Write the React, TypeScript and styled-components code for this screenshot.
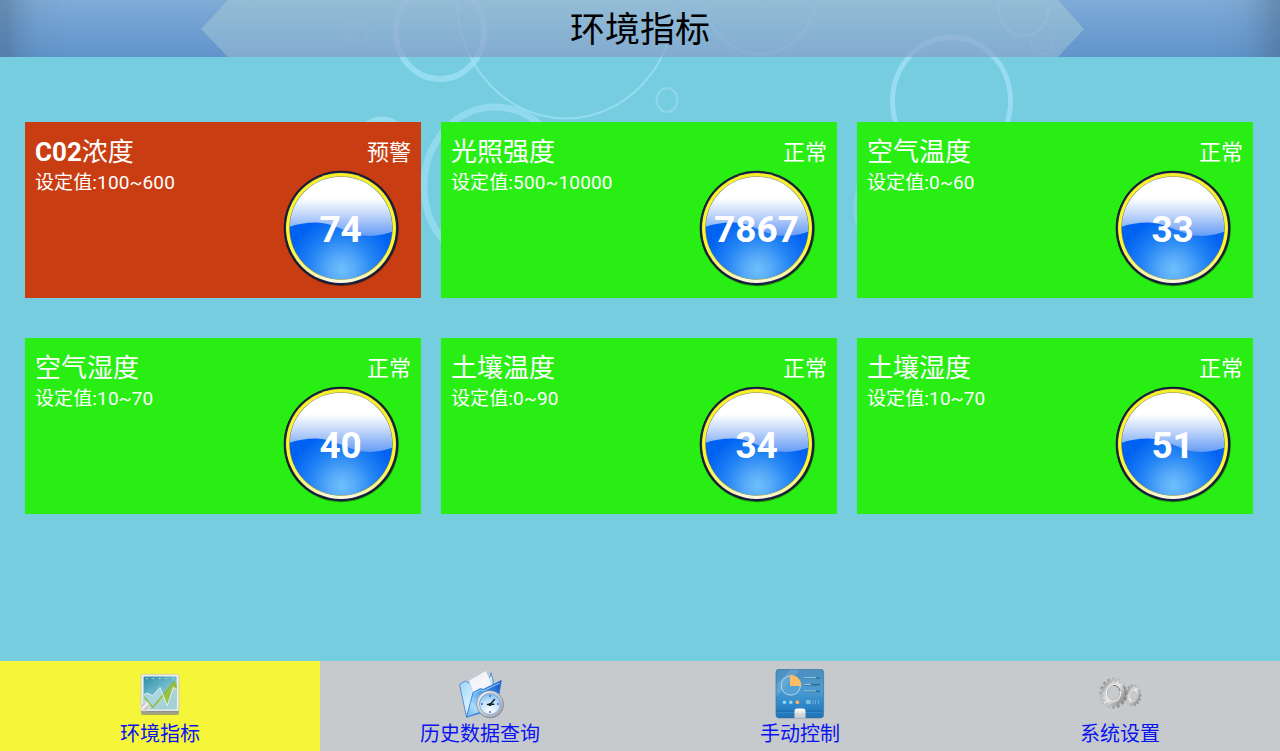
import React from "react";
import styled, { createGlobalStyle } from "styled-components";

const GlobalStyle = createGlobalStyle`
  * { box-sizing: border-box; }
  html, body { margin: 0; padding: 0; overflow: hidden; }
  body { font-family: Roboto, "Noto Sans CJK SC", sans-serif; }
`;

const Screen = styled.div`
  position: relative;
  display: flex;
  flex-direction: column;
  width: 1280px;
  height: 751px;
  overflow: hidden;
  background: #76cde0;
`;

const Wallpaper = styled.svg`
  position: absolute;
  inset: 0;
`;

const Header = styled.header`
  position: relative;
  flex: none;
  height: 57px;
  display: flex;
  justify-content: center;
  background:
    linear-gradient(90deg, rgba(58, 84, 112, 0.36) 0, rgba(58, 84, 112, 0.34) 8px, rgba(58, 84, 112, 0.26) 13px, rgba(70, 110, 140, 0.1) 35px, transparent 68px),
    linear-gradient(270deg, rgba(58, 84, 112, 0.36) 0, rgba(58, 84, 112, 0.34) 6px, rgba(58, 84, 112, 0.26) 13px, rgba(70, 110, 140, 0.1) 35px, transparent 68px),
    linear-gradient(180deg, #80abd6 0%, #6f9fd2 50%, #6194cb 100%);
`;

const Ribbon = styled.div`
  width: 883px;
  margin-left: 5px;
  height: 57px;
  background: linear-gradient(180deg, #94bcd6 0%, #8ab4d3 50%, #82abd0 100%);
  clip-path: polygon(27px 0, 857px 0, 100% 29px, 857px 100%, 27px 100%, 0 29px);
`;

const HeaderRings = styled.svg`
  position: absolute;
  inset: 0;
`;

const TitleLayer = styled.div`
  position: absolute;
  inset: 0;
  display: flex;
  justify-content: center;
`;

const Title = styled.h1`
  margin: 0;
  padding-top: 2px;
  font-size: 35px;
  line-height: 57px;
  font-weight: 400;
  color: #000;
`;

const Grid = styled.main`
  position: relative;
  flex: 1;
  display: grid;
  grid-template-columns: repeat(3, 396px);
  grid-auto-rows: 176px;
  align-content: start;
  gap: 40px 20px;
  padding: 65px 27px 0 25px;
`;

const Card = styled.section<{ $alert?: boolean }>`
  display: flex;
  justify-content: space-between;
  padding: 13px 10px 0 10px;
  color: #fff;
  background: ${(p) => (p.$alert ? "rgba(202, 58, 15, 0.985)" : "rgba(39, 238, 15, 0.985)")};
`;

const CardInfo = styled.div`
  display: flex;
  flex-direction: column;
`;

const CardName = styled.div`
  font-size: 26px;
  line-height: 34px;
  b { font-weight: 700; }
`;

const CardRange = styled.div`
  font-size: 19px;
  line-height: 28px;
  letter-spacing: 0.12px;
`;

const CardState = styled.div`
  display: flex;
  flex-direction: column;
  align-items: flex-end;
`;

const StateText = styled.div`
  padding-top: 1px;
  font-size: 22px;
  line-height: 34px;
`;

const Orb = styled.div`
  display: grid;
  width: 120px;
  height: 120px;
  margin: -2.4px 10.4px 0 0;
  > * { grid-area: 1 / 1; }
`;

const OrbValue = styled.span`
  position: relative;
  place-self: center;
  padding-top: 5px;
  font-size: 37px;
  line-height: 40px;
  font-weight: 700;
`;

const NavBar = styled.nav`
  position: relative;
  flex: none;
  display: grid;
  grid-template-columns: repeat(4, 1fr);
  height: 90px;
`;

const NavItem = styled.div<{ $active?: boolean }>`
  display: flex;
  flex-direction: column;
  align-items: center;
  padding-top: 8px;
  color: #0a14f0;
  background: ${(p) => (p.$active ? "#f5f53a" : "#c6cacd")};
`;

const NavLabel = styled.span`
  font-size: 20px;
  line-height: 31px;
`;

type Ring = [cx: number, cy: number, rx: number, ry: number, w: number, o: number];

const rings: Ring[] = [
  [440, 31, 44.5, 48, 6, 0.75],
  [566, 0, 109, 118.5, 2, 0.75],
  [495, 186, 71, 79, 7, 0.65],
  [667, 100, 10.5, 12, 2, 0.6],
  [760, -8, 57, 62, 3, 0.5],
  [357, 32, 11, 12, 2, 0.4],
  [951.5, 101, 59, 63.5, 5, 0.8],
  [1023.5, 8, 25, 28, 3, 0.6],
  [1042, 42, 11, 12, 2, 0.4],
  [382, 149, 27, 30, 5, 0.75],
  [903, 208, 48, 52, 3, 0.35],
  [1009, 201, 25, 29, 3, 0.6],
  [634, 176, 45, 53, 3, 0.5],
];

const RingShapes = ({ color, fade = 1 }: { color: string; fade?: number }) => (
  <>
    {rings.map(([cx, cy, rx, ry, w, o], i) => (
      <ellipse key={i} cx={cx} cy={cy} rx={rx} ry={ry} fill="none" stroke={color} strokeWidth={w} opacity={o * fade} />
    ))}
  </>
);

const OrbArt = () => (
  <svg width="120" height="120" viewBox="0 0 120 120">
    <defs>
      <linearGradient id="orbRim" x1="0" y1="0" x2="0" y2="1">
        <stop offset="0" stopColor="#f6ee2c" />
        <stop offset="0.65" stopColor="#fff830" />
        <stop offset="0.88" stopColor="#fbf790" />
        <stop offset="1" stopColor="#fdfbe6" />
      </linearGradient>
      <radialGradient id="orbBlue" gradientUnits="userSpaceOnUse" cx="61" cy="102" r="54">
        <stop offset="0" stopColor="#6dc0fa" />
        <stop offset="0.25" stopColor="#56aaf8" />
        <stop offset="0.6" stopColor="#2384f4" />
        <stop offset="1" stopColor="#0062f2" />
      </radialGradient>
      <linearGradient id="orbGloss" gradientUnits="userSpaceOnUse" x1="0" y1="10" x2="0" y2="69">
        <stop offset="0" stopColor="#fff" />
        <stop offset="0.34" stopColor="#fff" />
        <stop offset="0.6" stopColor="#c8dafb" />
        <stop offset="1" stopColor="#6098f4" />
      </linearGradient>
      <clipPath id="orbClip"><circle cx="60" cy="60" r="51.3" /></clipPath>
    </defs>
    <circle cx="60.3" cy="60.6" r="57.6" fill="#201a18" opacity="0.5" />
    <circle cx="60" cy="60" r="57.2" fill="#12182c" />
    <circle cx="60" cy="60" r="55.7" fill="none" stroke="#1f2e66" strokeWidth="0.8" />
    <circle cx="60" cy="60" r="55" fill="url(#orbRim)" />
    <circle cx="60" cy="60" r="51.8" fill="#a39a35" />
    <g clipPath="url(#orbClip)">
      <rect x="8" y="8" width="104" height="104" fill="url(#orbBlue)" />
      <path d="M8 8H112V63.5C101 67.5 89 69.5 76 66.5C64 63.5 51 54.5 35 54.5C25 54.5 16 56 8 59Z" fill="url(#orbGloss)" />
    </g>
  </svg>
);

const ChartIcon = () => (
  <svg width="50" height="50" viewBox="0 0 50 50">
    <defs>
      <linearGradient id="chBg" x1="0" y1="0" x2="0.7" y2="1">
        <stop offset="0" stopColor="#2f8ba7" />
        <stop offset="0.55" stopColor="#75bfcf" />
        <stop offset="1" stopColor="#66aeb9" />
      </linearGradient>
      <linearGradient id="chBase" x1="0" y1="0" x2="0" y2="1">
        <stop offset="0" stopColor="#d5d9d8" />
        <stop offset="0.8" stopColor="#9aa0a0" />
        <stop offset="1" stopColor="#a5a85d" />
      </linearGradient>
    </defs>
    <rect x="6" y="30" width="38" height="16" rx="2" fill="url(#chBase)" />
    <rect x="6" y="5.3" width="38" height="37" rx="2.5" fill="#eceeed" stroke="#bfc5bf" strokeWidth="0.7" />
    <path d="M8 42.5H42" stroke="#777e7e" strokeWidth="0.7" />
    <rect x="8.6" y="7.6" width="33" height="32.6" rx="1" fill="url(#chBg)" />
    <path d="M17.7 38.3L28.3 26L39 12.7L41.6 17.7V24L38.3 18.5L32.3 36L29 30Z" fill="#a6c421" opacity="0.75" />
    <path d="M9 25.5L12.5 24L17.7 27L25 18.5L32.3 36.7L38.3 18.5L41.6 20.5V40.2H9Z" fill="#cfe6e8" opacity="0.6" />
    <path d="M9 27.7L17.7 38.3L28.3 26L39 12.7L41.6 17.7" fill="none" stroke="#91b62b" strokeWidth="1.2" />
    <path d="M9 25.5L12.5 24L17.7 27L25 18.5L32.3 36.7L38.3 18.5L41.6 20.5" fill="none" stroke="#e9f6f5" strokeWidth="0.9" />
    <path d="M11 9.5H39" stroke="#bce0e5" strokeWidth="1.2" strokeDasharray="1.5 5" />
    <circle cx="10" cy="37.5" r="4.4" fill="#c8cccb" stroke="#f1f1ed" strokeWidth="0.7" />
    <path d="M7 40L13 34" stroke="#f4f4f2" strokeWidth="1.8" />
  </svg>
);

const HistoryIcon = () => (
  <svg width="50" height="50" viewBox="0 0 50 50">
    <defs>
      <linearGradient id="hiBack" x1="0" y1="0" x2="1" y2="1">
        <stop offset="0" stopColor="#8fcdf8" />
        <stop offset="0.5" stopColor="#d6f0ff" />
        <stop offset="1" stopColor="#4f9ee8" />
      </linearGradient>
      <linearGradient id="hiFront" x1="1" y1="0" x2="0" y2="1">
        <stop offset="0" stopColor="#124fc0" />
        <stop offset="0.4" stopColor="#3c92e6" />
        <stop offset="0.75" stopColor="#a8dcfb" />
        <stop offset="1" stopColor="#6ab4f0" />
      </linearGradient>
      <radialGradient id="hiFace" cx="0.5" cy="0.85" r="0.85">
        <stop offset="0" stopColor="#fff" />
        <stop offset="0.55" stopColor="#c4e6fb" />
        <stop offset="1" stopColor="#7dbcf0" />
      </radialGradient>
      <linearGradient id="hiRim" x1="0" y1="0" x2="1" y2="1">
        <stop offset="0" stopColor="#f7f9fb" />
        <stop offset="1" stopColor="#98a4b4" />
      </linearGradient>
    </defs>
    <path d="M4.5 15.5L10.5 12L13.5 14L35 8L36 3.8L38.3 12L34 42L11.5 48Z" fill="url(#hiBack)" stroke="#377fce" strokeWidth="0.8" strokeLinejoin="round" />
    <path d="M14 11.5L30.7 1.7L41 23L21 33Z" fill="#f4f6fc" stroke="#c0cadc" strokeWidth="0.6" />
    <path d="M17 13L30 5M18 15L31 8" stroke="#dce3ef" strokeWidth="0.5" />
    <path d="M18 23.5L25.5 19.5L28 20.5L46.3 11.5L42 37L11.5 48.2Z" fill="url(#hiFront)" stroke="#2b6fd0" strokeWidth="0.8" strokeLinejoin="round" />
    <path d="M19 24.5L25.5 21L28 22L44.8 14" fill="none" stroke="#a9dbff" strokeWidth="0.9" />
    <circle cx="35.2" cy="35.6" r="13.6" fill="#5d687a" opacity="0.55" />
    <circle cx="35" cy="35" r="13.3" fill="url(#hiRim)" stroke="#7c899c" strokeWidth="0.6" />
    <circle cx="35" cy="35" r="10.5" fill="url(#hiFace)" stroke="#7b91ae" strokeWidth="0.7" />
    <path d="M35 26V28M35 42V44M26 35H28M42 35H44" stroke="#5b5fc4" strokeWidth="1.5" />
    <path d="M32.5 35.5L38.8 35.3M34.5 36L39.5 30.5" stroke="#15202c" strokeWidth="1.5" strokeLinecap="round" />
    <circle cx="35" cy="35.5" r="1.5" fill="#15202c" />
  </svg>
);

const ControlIcon = () => (
  <svg width="50" height="50" viewBox="0 0 50 50">
    <defs>
      <linearGradient id="coBg" x1="0" y1="0" x2="0" y2="1">
        <stop offset="0" stopColor="#4c8fbe" />
        <stop offset="0.45" stopColor="#4a9bd2" />
        <stop offset="0.83" stopColor="#2480c4" />
        <stop offset="1" stopColor="#2374b2" />
      </linearGradient>
      <linearGradient id="coTab" x1="0" y1="0" x2="0" y2="1">
        <stop offset="0" stopColor="#fff" />
        <stop offset="1" stopColor="#c3c7cc" />
      </linearGradient>
    </defs>
    <rect x="1" y="0.3" width="47.6" height="48.6" rx="3" fill="url(#coBg)" stroke="#3575a4" strokeWidth="0.7" />
    <path d="M1.5 15L15 1H25L1.5 27Z" fill="#fff" opacity="0.13" />
    <path d="M1.5 42.3H48" stroke="#1b5c94" strokeWidth="0.9" />
    <path d="M1.5 43.2H48" stroke="#4c9fd6" strokeWidth="0.6" />
    <circle cx="15.8" cy="16.5" r="9.6" fill="#6fb1dd" fillOpacity="0.3" stroke="#b3d9f0" strokeWidth="1" />
    <path d="M15 6C21 5.5 26.3 10 26.3 17H15Z" fill="#fbbd62" />
    <path d="M29 9H45M29 15.7H45M29 22.3H45" stroke="#33708f" strokeWidth="1.7" />
    <path d="M29 8.6H41M29 15.3H36M29 21.9H41" stroke="#8cc2df" strokeWidth="1.3" />
    <circle cx="9.4" cy="33.2" r="1.7" fill="#8bdcf7" />
    <circle cx="15.8" cy="33.2" r="1.7" fill="#8bdcf7" />
    <circle cx="22.4" cy="33.2" r="1.9" fill="#ffb160" />
    <circle cx="33" cy="33" r="2.3" fill="#72bde8" />
    <path d="M31.5 31.5L35.5 35M35.5 31.2V35M38 31V35M40.5 31V35M43.5 31V35" stroke="#9ad3f1" strokeWidth="0.9" opacity="0.55" />
    <path d="M19.5 48.9V42Q19.5 39.5 22 39.5H28Q30.5 39.5 30.5 42V48.9Z" fill="url(#coTab)" />
    <path d="M19.5 45H30.5" stroke="#c5cbd1" strokeWidth="0.6" />
  </svg>
);

const gearPath = (cx: number, cy: number, rx: number, ry: number, teeth: number, depth: number) => {
  const pts: string[] = [];
  const step = (Math.PI * 2) / teeth;
  for (let i = 0; i < teeth; i++) {
    [[-0.3, depth], [-0.2, 1], [0.2, 1], [0.3, depth]].forEach(([a, k]) => {
      const t = (i + a) * step;
      pts.push(`${(cx + Math.cos(t) * rx * k).toFixed(2)} ${(cy + Math.sin(t) * ry * k).toFixed(2)}`);
    });
  }
  return `M${pts.join("L")}Z`;
};

const holePath = (cx: number, cy: number, rx: number, ry: number) =>
  `M${cx - rx} ${cy}a${rx} ${ry} 0 1 0 ${rx * 2} 0a${rx} ${ry} 0 1 0 ${-rx * 2} 0Z`;

const GearsIcon = () => (
  <svg width="50" height="50" viewBox="0 0 50 50">
    <defs>
      <linearGradient id="geBig" x1="0" y1="0.1" x2="1" y2="0.9">
        <stop offset="0" stopColor="#6c6c6c" />
        <stop offset="0.3" stopColor="#cfcfcf" />
        <stop offset="0.5" stopColor="#e6e6e6" />
        <stop offset="0.75" stopColor="#a2a2a2" />
        <stop offset="1" stopColor="#777" />
      </linearGradient>
    </defs>
    <g fill="url(#geBig)" fillRule="evenodd" stroke="#777" strokeWidth="0.3">
      <path d={gearPath(38.3, 26.3, 7.8, 10.8, 14, 0.8) + holePath(38.7, 26.8, 3.2, 4.5)} />
      <path d={gearPath(18.5, 24.2, 13.8, 15.2, 16, 0.8) + holePath(18.7, 24, 6.4, 7.6)} />
    </g>
    <ellipse cx="18.5" cy="24" rx="7.2" ry="8.4" fill="none" stroke="#ededed" strokeWidth="1.1" />
    <ellipse cx="38.6" cy="26.8" rx="3.8" ry="5.1" fill="none" stroke="#e6e6e6" strokeWidth="0.8" />
    <path d="M25.2 22A7 8 0 0 0 18 16.4" fill="none" stroke="#747474" strokeWidth="1" />
    <path d="M29 17Q32 24 28.5 33" fill="none" stroke="#6f6f6f" strokeWidth="1.1" opacity="0.7" />
  </svg>
);

interface Metric {
  code?: string;
  name: string;
  range: string;
  value: number;
  alert?: boolean;
}

const metrics: Metric[] = [
  { code: "C02", name: "浓度", range: "100~600", value: 74, alert: true },
  { name: "光照强度", range: "500~10000", value: 7867 },
  { name: "空气温度", range: "0~60", value: 33 },
  { name: "空气湿度", range: "10~70", value: 40 },
  { name: "土壤温度", range: "0~90", value: 34 },
  { name: "土壤湿度", range: "10~70", value: 51 },
];

const navItems = [
  { label: "环境指标", icon: <ChartIcon /> },
  { label: "历史数据查询", icon: <HistoryIcon /> },
  { label: "手动控制", icon: <ControlIcon /> },
  { label: "系统设置", icon: <GearsIcon /> },
];

export default function App() {
  return (
    <>
      <GlobalStyle />
      <Screen>
        <Wallpaper width="1280" height="751">
          <RingShapes color="#a0e0f4" />
        </Wallpaper>
        <Header>
          <Ribbon />
          <HeaderRings width="1280" height="57">
            <RingShapes color="#a2bfe2" fade={0.45} />
          </HeaderRings>
          <TitleLayer>
            <Title>环境指标</Title>
          </TitleLayer>
        </Header>
        <Grid>
          {metrics.map((m) => (
            <Card key={m.name} $alert={m.alert}>
              <CardInfo>
                <CardName>
                  {m.code && <b>{m.code}</b>}
                  {m.name}
                </CardName>
                <CardRange>设定值:{m.range}</CardRange>
              </CardInfo>
              <CardState>
                <StateText>{m.alert ? "预警" : "正常"}</StateText>
                <Orb>
                  <OrbArt />
                  <OrbValue>{m.value}</OrbValue>
                </Orb>
              </CardState>
            </Card>
          ))}
        </Grid>
        <NavBar>
          {navItems.map((n, i) => (
            <NavItem key={n.label} $active={i === 0}>
              {n.icon}
              <NavLabel>{n.label}</NavLabel>
            </NavItem>
          ))}
        </NavBar>
      </Screen>
    </>
  );
}
